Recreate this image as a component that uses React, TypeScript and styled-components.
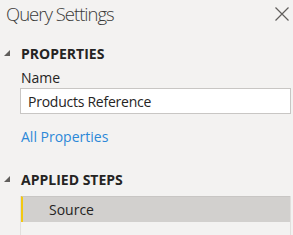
import React from 'react';
import styled, { createGlobalStyle } from 'styled-components';

const GlobalStyle = createGlobalStyle`
  html, body {
    margin: 0;
    padding: 0;
    background: #f3f2f1;
  }
  body {
    font-family: "Open Sans", "Noto Sans", sans-serif;
    color: #252423;
  }
`;

const STEPS = [{ name: 'Source', selected: true }];

const App = () => {
  return (
    <>
      <GlobalStyle />
      <Panel>
        <Header>
          <Title>Query Settings</Title>
          <CloseButton aria-label="Close">
            <svg width="14" height="14" viewBox="0 0 14 14">
              <path d="M0.5 0.5 L13.5 13.5 M13.5 0.5 L0.5 13.5" stroke="#605e5c" strokeWidth="1.2" fill="none" />
            </svg>
          </CloseButton>
        </Header>

        <Section $gap={17}>
          <SectionHeader>
            <Caret />
            <SectionTitle>PROPERTIES</SectionTitle>
          </SectionHeader>
          <SectionBody>
            <Label>Name</Label>
            <TextInput defaultValue="Products Reference" />
            <Link href="#">All Properties</Link>
          </SectionBody>
        </Section>

        <Section $gap={23}>
          <SectionHeader>
            <Caret />
            <SectionTitle>APPLIED STEPS</SectionTitle>
          </SectionHeader>
          <SectionBody>
            <StepList>
              {STEPS.map((step) => (
                <StepRow key={step.name} $selected={step.selected}>
                  {step.name}
                </StepRow>
              ))}
            </StepList>
          </SectionBody>
        </Section>
      </Panel>
    </>
  );
};

export default App;

const Panel = styled.div`
  width: 293px;
  height: 235px;
  overflow: hidden;
  display: flex;
  flex-direction: column;
`;

const Header = styled.div`
  display: flex;
  align-items: center;
  justify-content: space-between;
  padding: 1px 4px 0 6px;
  height: 28px;
`;

const Title = styled.div`
  font-weight: 300;
  font-size: 18.5px;
  letter-spacing: -1px;
  color: #3b3a39;
`;

const CloseButton = styled.div`
  display: flex;
  width: 14px;
  height: 14px;
  margin-top: 1px;
`;

const Section = styled.div<{ $gap: number }>`
  display: flex;
  flex-direction: column;
  margin-top: ${(p) => p.$gap}px;
`;

const SectionHeader = styled.div`
  display: flex;
  align-items: center;
  height: 20px;
  padding-left: 4px;
`;

const Caret = styled.span`
  width: 0;
  height: 0;
  border-style: solid;
  border-width: 0 0 6px 6px;
  border-color: transparent transparent #605e5c transparent;
  margin-right: 11px;
`;

const SectionTitle = styled.div`
  font-weight: 700;
  font-size: 14px;
  color: #252423;
`;

const SectionBody = styled.div`
  display: flex;
  flex-direction: column;
  padding: 0 2px 0 20px;
`;

const Label = styled.div`
  font-size: 14px;
  color: #252423;
  margin-top: 5px;
  height: 18px;
  padding-left: 1px;
`;

const TextInput = styled.input`
  margin-top: 2px;
  height: 26px;
  box-sizing: border-box;
  border: 1px solid #c8c6c4;
  background: #ffffff;
  padding: 0 7px;
  font-family: inherit;
  font-size: 14px;
  letter-spacing: -0.25px;
  color: #252423;
  outline: none;
`;

const Link = styled.a`
  margin-top: 13px;
  padding-left: 1px;
  font-size: 14px;
  color: #2b88d8;
  text-decoration: none;
`;

const StepList = styled.div`
  margin-top: 7px;
  border-left: 1px solid #e1dfdd;
  border-right: 1px solid #e1dfdd;
  min-height: 60px;
`;

const StepRow = styled.div<{ $selected?: boolean }>`
  height: 26px;
  box-sizing: border-box;
  display: flex;
  align-items: center;
  padding-left: 26px;
  font-size: 14px;
  color: #252423;
  background: ${(p) => (p.$selected ? '#d2d0ce' : 'transparent')};
  border-top: 1px solid ${(p) => (p.$selected ? '#c8c6c4' : 'transparent')};
  border-left: 2px solid ${(p) => (p.$selected ? '#f2c811' : 'transparent')};
`;
